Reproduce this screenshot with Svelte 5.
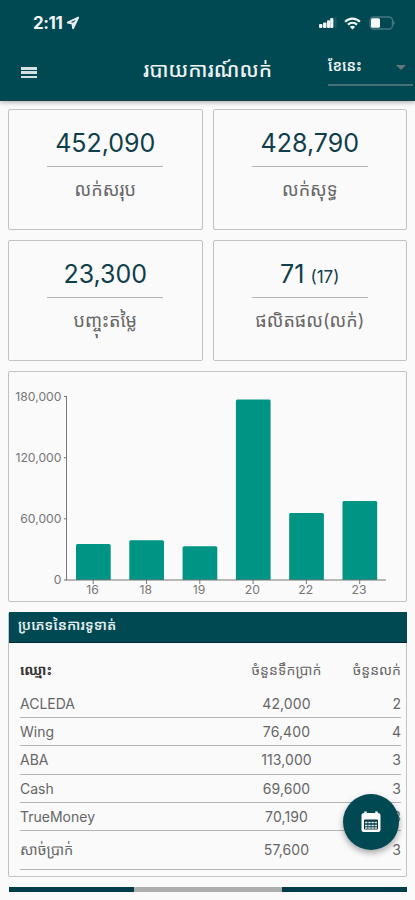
<script>
    let stats = [
        { value: "452,090", label: "លក់សរុប" },
        { value: "428,790", label: "លក់សុទ្ធ" },
        { value: "23,300", label: "បញ្ចុះតម្លៃ" },
        { value: "71", extra: "(17)", label: "ផលិតផល(លក់)" },
    ];

    let days = [
        { day: 16, total: 35200 },
        { day: 18, total: 39100 },
        { day: 19, total: 33200 },
        { day: 20, total: 177000 },
        { day: 22, total: 65700 },
        { day: 23, total: 77500 },
    ];

    let payments = [
        { name: "ACLEDA", amount: "42,000", count: 2 },
        { name: "Wing", amount: "76,400", count: 4 },
        { name: "ABA", amount: "113,000", count: 3 },
        { name: "Cash", amount: "69,600", count: 3 },
        { name: "TrueMoney", amount: "70,190", count: 3 },
        { name: "សាច់ប្រាក់", amount: "57,600", count: 3, khmer: true },
    ];

    // chart geometry, in px inside the card
    const base = 208;
    const plot = 183.5;
    const max = 180000;
    const ticks = [0, 60000, 120000, 180000];

    function y(value) {
        return base - (value / max) * plot;
    }

    function bar(i, value) {
        const left = 67 + i * 53.3;
        const top = y(value);
        return `M${left} ${base}V${top + 1.5}q0 -1.5 1.5 -1.5h31.7q1.5 0 1.5 1.5V${base}z`;
    }
</script>

<div class="screen">
    <header>
        <div class="status">
            <div class="clock">
                2:11
                <svg width="14" height="14" viewBox="0 0 14 14">
                    <path d="M12.2 1.5 1.7 6.6l4.7.9.7 4.8z" fill="none" stroke="#e9eff0" stroke-width="1.8" stroke-linejoin="round" />
                    <path d="M12.2 1.5 6.4 7.5l.7 4.8z" fill="#e9eff0" />
                </svg>
            </div>
            <div class="signals">
                <svg width="18" height="12" viewBox="0 0 18 12" fill="#f1f5f5">
                    <rect x="0" y="7" width="3.4" height="4" rx="1" />
                    <rect x="4" y="5.5" width="3.5" height="5.5" rx="1" />
                    <rect x="8" y="3.2" width="3.2" height="7.8" rx="1" />
                    <rect x="11.2" y="1" width="3.2" height="10" rx="1" />
                    <rect x="15.6" y="0" width="2" height="11" rx="1" fill="#1d5a63" />
                </svg>
                <svg width="17" height="13" viewBox="0 0 17 13">
                    <g fill="none" stroke="#f1f5f5" stroke-width="2.2">
                        <path d="M1.1 4.7C5 .5 12 .5 15.9 4.7" />
                        <path d="M4 7.6c2.5-2.5 6.5-2.5 9 0" />
                    </g>
                    <path d="m8.5 12.5-2.7-2.8c1.6-1.3 3.8-1.3 5.4 0z" fill="#f1f5f5" />
                </svg>
                <svg width="27" height="14" viewBox="0 0 27 14">
                    <rect x="1" y="1" width="22.5" height="12" rx="3.5" fill="none" stroke="#467780" stroke-width="1.3" />
                    <rect x="2" y="2.3" width="9" height="9.4" rx="1.5" fill="#f7fafa" />
                    <path d="M24.5 4.6q2 2.4 0 4.8z" fill="#6f969c" />
                </svg>
            </div>
        </div>
        <div class="toolbar">
            <button class="menu" aria-label="menu">
                <span></span>
                <span></span>
                <span></span>
            </button>
            <h1>របាយការណ៍លក់</h1>
            <div class="period">
                <span>ខែនេះ</span>
                <i class="arrow"></i>
            </div>
        </div>
    </header>

    <main>
        <section class="stats">
            {#each stats as stat}
                <div class="card stat">
                    <div class="value">
                        {stat.value}{#if stat.extra}<small>{stat.extra}</small>{/if}
                    </div>
                    <div class="label">{stat.label}</div>
                </div>
            {/each}
        </section>

        <section class="card chart">
            <svg width="397" height="228" viewBox="0 0 397 228">
                {#each days as d, i}
                    <path d={bar(i, d.total)} fill="#009485" />
                    <path d="M{84.2 + i * 53.3} {base}v4" class="axis" />
                    <text x={83.5 + i * 53.3} y="222" text-anchor="middle">{d.day}</text>
                {/each}
                {#each ticks as tick}
                    <path d="M55 {y(tick)}h3" class="axis" />
                    <text x="52.5" y={y(tick) + 4} text-anchor="end">{tick.toLocaleString("en-US")}</text>
                {/each}
                <path d="M57.5 {base - plot}V{base}H377" class="axis" />
            </svg>
        </section>

        <section class="card payments">
            <h2>ប្រភេទនៃការទូទាត់</h2>
            <div class="table">
                <div class="row head">
                    <b>ឈ្មោះ</b>
                    <span>ចំនួនទឹកប្រាក់</span>
                    <span>ចំនួនលក់</span>
                </div>
                {#each payments as p}
                    <div class="row" class:tall={p.khmer}>
                        <span>{p.name}</span>
                        <span>{p.amount}</span>
                        <span>{p.count}</span>
                    </div>
                {/each}
            </div>
        </section>

        <div class="next">
            <div class="handle"></div>
        </div>
    </main>

    <button class="fab" aria-label="calendar">
        <svg width="22" height="24" viewBox="0 0 22 24">
            <path d="M5.5 1.5v4M16.5 1.5v4" stroke="#fff" stroke-width="2.6" />
            <rect x="1.5" y="3" width="19" height="19" rx="2.5" fill="#fff" />
            <rect x="4" y="9.500" width="14" height="10" rx="1" fill="#073b46" />
            <path d="M5 12.500h12M5 15.500h12M5 18h12" stroke="#dfe8e8" stroke-width="1.700" stroke-dasharray="2.500 .700" />
        </svg>
    </button>
</div>

<style>
    :global(body) {
        margin: 0;
        background: #fafafa;
    }
    .screen {
        position: relative;
        width: 415px;
        height: 900px;
        overflow: hidden;
        background: #fafafa;
        color: #666;
        font-family: Inter, "Noto Sans Khmer", "Khmer OS", "Noto Sans", sans-serif;
    }
    header {
        position: relative;
        box-sizing: border-box;
        height: 101px;
        background: #004852;
        border-bottom: 1px solid #17414b;
        box-shadow: 0 2px 4px rgba(0, 0, 0, 0.25);
        color: #eef3f3;
    }
    .status {
        box-sizing: border-box;
        display: flex;
        justify-content: space-between;
        align-items: center;
        height: 46px;
        padding: 0 20px 0 33px;
    }
    .clock {
        display: flex;
        align-items: center;
        gap: 4px;
        font-size: 17px;
        font-weight: 700;
        letter-spacing: -0.4px;
    }
    .signals {
        display: flex;
        align-items: center;
        gap: 8px;
        margin-right: -1px;
    }
    .signals svg:first-child {
        margin-right: -1px;
    }
    .toolbar {
        display: grid;
        grid-template-columns: 87px 1fr 87px;
        height: 54px;
    }
    .menu {
        display: flex;
        flex-direction: column;
        gap: 1.8px;
        width: 16px;
        margin: 21px 0 0 21px;
        padding: 0;
        border: none;
        background: none;
    }
    .menu span {
        height: 2.6px;
        background: #d5e0e1;
    }
    h1 {
        margin: 0;
        line-height: 48px;
        font-size: 20.5px;
        font-weight: 500;
        text-align: center;
        white-space: nowrap;
    }
    .period {
        box-sizing: border-box;
        display: flex;
        justify-content: space-between;
        align-items: center;
        width: 85px;
        height: 40px;
        padding: 0 7px 0 0;
        border-bottom: 2px solid #467078;
        font-size: 14.5px;
        font-weight: 600;
    }
    .arrow {
        border: 5px solid transparent;
        border-top-color: #67747a;
        border-bottom: none;
        margin-top: 5px;
    }
    main {
        display: flex;
        flex-direction: column;
        gap: 10px;
        padding: 8px 8px 0 8px;
    }
    .card {
        box-sizing: border-box;
        border: 1px solid #c2c2c2;
        border-radius: 2px;
    }
    .stats {
        display: grid;
        grid-template-columns: 1fr 1fr;
        gap: 10px;
    }
    .stat {
        height: 121px;
        display: flex;
        flex-direction: column;
        align-items: center;
    }
    .value {
        box-sizing: border-box;
        width: 116px;
        height: 57px;
        padding-top: 17px;
        border-bottom: 1px solid #b5b5b5;
        color: #103e4a;
        font-size: 25px;
        line-height: 32px;
        text-align: center;
        white-space: nowrap;
    }
    .value small {
        margin-left: 6px;
        font-size: 17px;
    }
    .label {
        margin-top: 6px;
        font-size: 18px;
        line-height: 34px;
        white-space: nowrap;
    }
    .chart {
        height: 231px;
    }
    .chart svg {
        display: block;
    }
    .chart text {
        fill: #777;
        font-size: 12.2px;
    }
    .axis {
        fill: none;
        stroke: #777;
        stroke-width: 1;
    }
    .payments {
        height: 265px;
    }
    h2 {
        box-sizing: border-box;
        height: 31px;
        margin: -1px -1px 0 0;
        padding-left: 9px;
        border-bottom: 1px solid #002a3c;
        background: #004852;
        color: #e6eeee;
        font-size: 14px;
        font-weight: 600;
        line-height: 26px;
    }
    .table {
        padding: 0 5px 0 11px;
    }
    .row {
        box-sizing: border-box;
        display: grid;
        grid-template-columns: 216px 101px 1fr;
        align-items: center;
        height: 28.2px;
        border-bottom: 1px solid #b5b5b5;
        font-size: 14px;
        white-space: nowrap;
    }
    .row span:nth-child(2) {
        text-align: center;
        letter-spacing: 0.1px;
    }
    .row span:nth-child(3) {
        text-align: right;
    }
    .row.head {
        height: 47px;
        padding-top: 5px;
        border: none;
    }
    .head b {
        color: #333;
    }
    .row.tall {
        height: 39px;
    }
    .row.tall span:first-child {
        padding-bottom: 2px;
        font-size: 14.5px;
    }
    .next {
        display: flex;
        justify-content: center;
        height: 5px;
        margin-left: 1px;
        background: #003d4a;
    }
    .handle {
        width: 148px;
        background: #adadad;
    }
    .fab {
        position: absolute;
        right: 16px;
        top: 794px;
        display: flex;
        align-items: center;
        justify-content: center;
        width: 56px;
        height: 56px;
        padding: 0;
        border: none;
        border-radius: 50%;
        background: #004852;
        box-shadow: 0 3px 6px rgba(0, 0, 0, 0.35);
    }
</style>
